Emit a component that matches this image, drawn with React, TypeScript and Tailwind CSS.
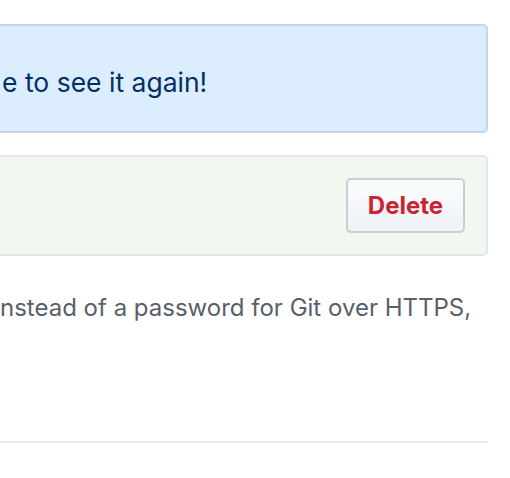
export default function App() {
  return (
    <div
      className="w-[510px] h-[478px] overflow-hidden bg-white"
      style={{ fontFamily: 'Inter, "Liberation Sans", sans-serif' }}
    >
      <div className="-ml-[6px] w-[494px] pt-[24px]">
        <div className="h-[109px] flex items-center rounded-[5px] border-2 border-[#c3d5ea] bg-[#dbedff] pl-[6px]">
          <p className="text-[26.5px] text-[#032f62] leading-none pt-[8px]">e to see it again!</p>
        </div>

        <div className="mt-[22px] h-[101px] flex items-center justify-end rounded-[5px] border-2 border-[#e3e6ea] bg-[#f0f8ef] pr-[21px]">
          <button className="h-[55px] w-[119px] rounded-[5px] border-2 border-[#cbced3] bg-gradient-to-b from-[#fafbfc] to-[#eff3f6] text-[24px] font-bold text-[#cb2431]">
            Delete
          </button>
        </div>

        <p className="mt-[36px] pl-[6px] text-[24px] leading-[31px] text-[#586069]">
          nstead of a password for Git over HTTPS,
        </p>

        <div className="mt-[118px] h-[2px] bg-[#e6e8ec]" />
      </div>
    </div>
  )
}
